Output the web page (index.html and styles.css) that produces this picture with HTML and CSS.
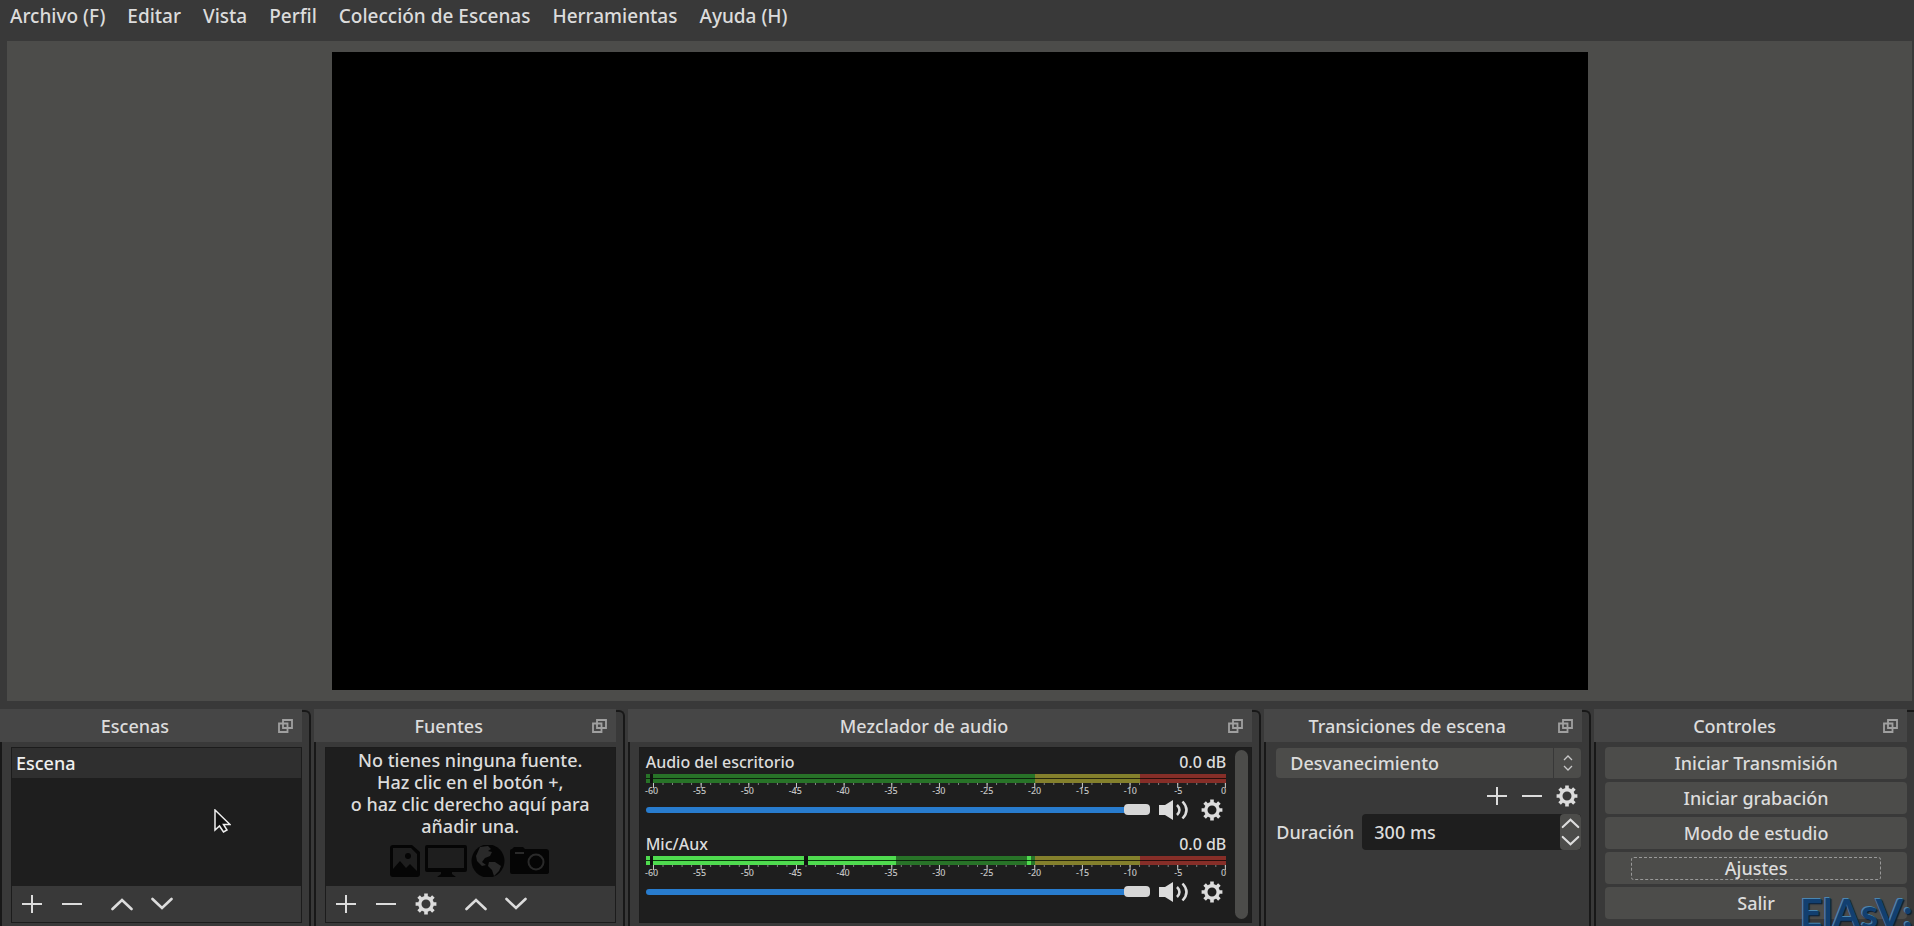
FILE: index.html
```html
<!DOCTYPE html>
<html lang="es">
<head>
<meta charset="utf-8">
<title>OBS</title>
<link rel="stylesheet" href="styles.css">
</head>
<body>
<svg class="defs" aria-hidden="true">
  <symbol id="plus" viewBox="0 0 22 22"><path d="M11 2v18M1 11h20" stroke="currentColor" stroke-width="2" fill="none"/></symbol>
  <symbol id="minus" viewBox="0 0 22 22"><path d="M1 11h20" stroke="currentColor" stroke-width="2" fill="none"/></symbol>
  <symbol id="up" viewBox="0 0 22 22"><path d="M1.500 16L11 7l9.500 9" stroke="currentColor" stroke-width="2.600" fill="none" stroke-linecap="round"/></symbol>
  <symbol id="down" viewBox="0 0 22 22"><path d="M1.500 6L11 15l9.500-9" stroke="currentColor" stroke-width="2.600" fill="none" stroke-linecap="round"/></symbol>
  <symbol id="gear" viewBox="0 0 22 22"><circle cx="11" cy="11" r="6.200" fill="none" stroke="currentColor" stroke-width="3.400"/><g stroke="currentColor" stroke-width="3.600"><path d="M11 .6v3.400M11 18v3.400M.6 11H4M18 11h3.400M3.600 3.600L6 6M16 16l2.400 2.400M3.600 18.400L6 16M16 6l2.400-2.400"/></g></symbol>
  <symbol id="float" viewBox="0 0 15 14"><g fill="none" stroke="currentColor" stroke-width="1.800"><path d="M5 1h9v8H5z"/><path d="M1 4.500h8.500V13H1z"/></g></symbol>
  <symbol id="speaker" viewBox="0 0 30 20"><path d="M0 5h6l8-5v20l-8-5H0z" fill="currentColor"/><path d="M18 5q5 5 0 10M23.500 1.500q8 8.500 0 17" fill="none" stroke="currentColor" stroke-width="2.500"/></symbol>
</svg>

<nav class="menubar">
  <button>Archivo (F)</button>
  <button>Editar</button>
  <button>Vista</button>
  <button>Perfil</button>
  <button>Colección de Escenas</button>
  <button>Herramientas</button>
  <button>Ayuda (H)</button>
</nav>

<main class="preview"><div class="canvas"></div></main>

<div class="docks">
  <section class="dock">
    <header class="dock-title"><h2>Escenas</h2><button class="float" aria-label="Desacoplar"><svg><use href="#float"/></svg></button></header>
    <div class="dock-body">
      <div class="panel">
        <ul class="scene-list"><li>Escena</li></ul>
        <div class="toolbar">
          <button aria-label="Añadir"><svg><use href="#plus"/></svg></button>
          <button aria-label="Quitar"><svg><use href="#minus"/></svg></button>
          <span class="spacer"></span>
          <button aria-label="Subir"><svg><use href="#up"/></svg></button>
          <button aria-label="Bajar"><svg><use href="#down"/></svg></button>
        </div>
      </div>
      <svg class="cursor" viewBox="0 0 17 24"><path d="M1 1v20l4.500-4 4 6 3.500-2-3.500-5.500H16z" fill="#111" stroke="#eee" stroke-width="1.500"/></svg>
    </div>
  </section>

  <section class="dock">
    <header class="dock-title"><h2>Fuentes</h2><button class="float" aria-label="Desacoplar"><svg><use href="#float"/></svg></button></header>
    <div class="dock-body">
      <div class="panel">
        <div class="sources">
          <p>No tienes ninguna fuente.<br>Haz clic en el botón +,<br>o haz clic derecho aquí para<br>añadir una.</p>
          <svg class="source-icons" viewBox="0 0 160 32">
            <path fill="#050505" fill-rule="evenodd" d="M3 0h19l8 7v22q0 3-3 3H3q-3 0-3-3V3q0-3 3-3zM3 3v21l7-8 6 7 4-4 7 7V9l-6-6z"/><circle cx="18" cy="11" r="3" fill="#050505"/>
            <path fill="#050505" fill-rule="evenodd" d="M37 0h38q2 0 2 2v23q0 2-2 2H62v2l4 3H47l4-3v-2H37q-2 0-2-2V2q0-2 2-2zm1 3v20h36V3z"/>
            <circle cx="98" cy="16" r="16.500" fill="#050505"/><path fill="#292929" d="M90 2l8-1 3 3-3 2 4 1-2 4-5 2-3 4 4 3-4 1-5-5-1-5zM99 17l6 0 6 4-2 5-5 5-2-6-4-4z"/>
            <path fill="#050505" d="M122 4l2-2h9l2 2h21q3 0 3 3v20q0 2-3 2h-34q-2 0-2-2V6q0-2 2-2z"/><path d="M125 8h9" stroke="#2a2a2a" stroke-width="2"/><circle cx="146" cy="17" r="7.500" fill="none" stroke="#2a2a2a" stroke-width="2"/>
          </svg>
        </div>
        <div class="toolbar">
          <button aria-label="Añadir"><svg><use href="#plus"/></svg></button>
          <button aria-label="Quitar"><svg><use href="#minus"/></svg></button>
          <button aria-label="Propiedades"><svg><use href="#gear"/></svg></button>
          <span class="spacer"></span>
          <button aria-label="Subir"><svg><use href="#up"/></svg></button>
          <button aria-label="Bajar"><svg><use href="#down"/></svg></button>
        </div>
      </div>
    </div>
  </section>

  <section class="dock">
    <header class="dock-title"><h2>Mezclador de audio</h2><button class="float" aria-label="Desacoplar"><svg><use href="#float"/></svg></button></header>
    <div class="dock-body">
      <div class="panel mixer">
        <div class="channels">
          <div class="channel">
            <div class="channel-head"><label for="vol-desktop">Audio del escritorio</label><span>0.0 dB</span></div>
            <div class="meter"><i class="clip"></i><div class="levels"></div></div>
            <div class="ticks"></div>
            <div class="scale"><span>-60</span><span>-55</span><span>-50</span><span>-45</span><span>-40</span><span>-35</span><span>-30</span><span>-25</span><span>-20</span><span>-15</span><span>-10</span><span>-5</span><span>0</span></div>
            <div class="channel-controls">
              <input id="vol-desktop" type="range" min="0" max="100" value="100">
              <button class="mute" aria-label="Silenciar"><svg><use href="#speaker"/></svg></button>
              <button class="config" aria-label="Configurar"><svg><use href="#gear"/></svg></button>
            </div>
          </div>
          <div class="channel">
            <div class="channel-head"><label for="vol-mic">Mic/Aux</label><span>0.0 dB</span></div>
            <div class="meter active"><i class="clip"></i><div class="levels"><i class="level"></i><i class="magnitude"></i><i class="peak"></i></div></div>
            <div class="ticks"></div>
            <div class="scale"><span>-60</span><span>-55</span><span>-50</span><span>-45</span><span>-40</span><span>-35</span><span>-30</span><span>-25</span><span>-20</span><span>-15</span><span>-10</span><span>-5</span><span>0</span></div>
            <div class="channel-controls">
              <input id="vol-mic" type="range" min="0" max="100" value="100">
              <button class="mute" aria-label="Silenciar"><svg><use href="#speaker"/></svg></button>
              <button class="config" aria-label="Configurar"><svg><use href="#gear"/></svg></button>
            </div>
          </div>
        </div>
        <div class="scrollbar"></div>
      </div>
    </div>
  </section>

  <section class="dock">
    <header class="dock-title"><h2>Transiciones de escena</h2><button class="float" aria-label="Desacoplar"><svg><use href="#float"/></svg></button></header>
    <div class="dock-body transitions">
      <div class="combo">
        <select aria-label="Transición"><option>Desvanecimiento</option></select>
        <svg class="combo-arrows" viewBox="0 0 10 16"><path d="M1 5l4-4 4 4M1 11l4 4 4-4" fill="none" stroke="#c8c8c8" stroke-width="1.300"/></svg>
      </div>
      <div class="transition-tools">
        <button aria-label="Añadir"><svg><use href="#plus"/></svg></button>
        <button aria-label="Quitar"><svg><use href="#minus"/></svg></button>
        <button aria-label="Propiedades"><svg><use href="#gear"/></svg></button>
      </div>
      <div class="duration">
        <label for="duration">Duración</label>
        <div class="spin">
          <input id="duration" type="text" value="300 ms">
          <div class="spin-buttons">
            <button aria-label="Aumentar"><svg><use href="#up"/></svg></button>
            <button aria-label="Disminuir"><svg><use href="#down"/></svg></button>
          </div>
        </div>
      </div>
    </div>
  </section>

  <section class="dock last">
    <header class="dock-title"><h2>Controles</h2><button class="float" aria-label="Desacoplar"><svg><use href="#float"/></svg></button></header>
    <div class="dock-body controls">
      <button>Iniciar Transmisión</button>
      <button>Iniciar grabación</button>
      <button>Modo de estudio</button>
      <button class="focused"><span>Ajustes</span></button>
      <button>Salir</button>
    </div>
  </section>
</div>
<div class="watermark">ElAsV:</div>
</body>
</html>
```

FILE: styles.css
```css
* { box-sizing: border-box; }

body {
  margin: 0;
  height: 100vh;
  display: flex;
  flex-direction: column;
  position: relative;
  overflow: hidden;
  background: #393939;
  color: #dcdcdc;
  font-family: "Noto Sans", "Open Sans", sans-serif;
  font-size: 18px;
  font-weight: 500;
}

button, input, select {
  font: inherit;
  color: inherit;
  background: none;
  border: 0;
  padding: 0;
  margin: 0;
}

svg { display: block; }
.defs { position: absolute; width: 0; height: 0; }

.menubar {
  display: flex;
  gap: 22px;
  height: 41px;
  padding: 0 10px 10px;
  align-items: center;
  font-size: 19px;
}

.preview {
  flex: 1;
  min-height: 0;
  margin: 0 2px 0 7px;
  padding: 11px;
  display: flex;
  justify-content: center;
  background: #4c4c4a;
}
.canvas { height: 100%; aspect-ratio: 1256 / 638; background: #000; }

.docks {
  display: grid;
  grid-template-columns: 311fr 311fr 634fr 327fr 320fr;
  column-gap: 3px;
  margin-top: 9px;
}

.dock {
  display: flex;
  flex-direction: column;
  min-width: 0;
  border: 2px solid #181818;
  border-bottom: 0;
  border-radius: 6px 6px 0 0;
}
.dock.last { border-right: 0; border-top-right-radius: 0; }

.dock-title {
  display: flex;
  align-items: center;
  height: 33px;
  margin: -3px 7px 0 -2px;
  background: #464646;
}
.dock-title h2 {
  flex: 1;
  margin: 0;
  text-align: center;
  font-size: 18px;
  font-weight: 500;
}
.float { width: 32px; padding-left: 8px; color: #a0a0a0; }
.float svg { width: 15px; height: 14px; }

.dock-body { flex: 1; position: relative; padding: 5px 7px 3px 9px; }

.panel {
  height: 176px;
  display: flex;
  flex-direction: column;
  border: 1px solid #1c1c1c;
  background: #1e1e1e;
}

.scene-list { flex: 1; margin: 0; padding: 0; list-style: none; }
.scene-list li { height: 30px; padding-left: 4px; line-height: 30px; background: #2f2f2f; color: #f0f0f0; }

.toolbar { display: flex; height: 36px; background: #393939; }
.toolbar button { width: 40px; display: flex; align-items: center; justify-content: center; }
.toolbar svg { width: 22px; height: 22px; }
.spacer { width: 10px; }

.cursor { position: absolute; left: 212px; top: 67px; width: 17px; height: 24px; }

.sources { flex: 1; display: flex; flex-direction: column; align-items: center; gap: 8px; }
.sources p { margin: 0; padding-top: 1px; text-align: center; line-height: 22px; white-space: nowrap; }
.source-icons { width: 160px; height: 32px; }

.mixer { flex-direction: row; gap: 9px; padding: 2px 3px 3px 6px; }
.channels { flex: 1; min-width: 0; }
.channel { height: 82px; }
.channel-head { display: flex; justify-content: space-between; height: 24px; line-height: 24px; font-size: 16px; }

.meter { display: flex; gap: 3px; height: 9px; background: #111; }
.meter > .clip { width: 4px; background: linear-gradient(#287328 4px, #0b260b 4px 5px, #287328 5px); }
.levels {
  flex: 1;
  position: relative;
  background:
    linear-gradient(transparent 4px, rgba(0, 0, 0, .7) 4px 5px, transparent 5px),
    linear-gradient(90deg, #287328 66.600%, #84802c 66.600% 85%, #862e28 85%);
}
.meter.active > .clip,
.level, .peak { background: linear-gradient(#4fdb4f 4px, #0b3a0b 4px 5px, #4fdb4f 5px); }
.level, .magnitude, .peak { position: absolute; top: 0; bottom: 0; }
.level { left: 0; width: 42.400%; }
.magnitude { left: 26.300%; width: 4px; background: #111; }
.peak { left: 65.300%; width: 4px; }

.ticks {
  height: 5px;
  margin-left: 7px;
  background:
    linear-gradient(90deg, #c8c8c8 1px, transparent 1px) 0 0 / calc((100% - 1px) / 12) 5px repeat-x,
    linear-gradient(90deg, #858585 1px, transparent 1px) 0 0 / calc((100% - 1px) / 60) 2px repeat-x;
}
.scale { display: flex; justify-content: space-between; height: 10px; margin-left: 6px; font-size: 9px; line-height: 6px; color: #c4c4c4; }
.scale span { width: 0; display: flex; justify-content: center; white-space: nowrap; }
.scale span:last-child { justify-content: flex-end; }

.channel-controls { display: flex; align-items: center; height: 24px; }
.channel-controls input { flex: 1; min-width: 0; height: 16px; appearance: none; }
.channel-controls input::-webkit-slider-runnable-track { height: 6px; border-radius: 3px; background: #287cce; }
.channel-controls input::-webkit-slider-thumb { appearance: none; width: 26px; height: 11px; margin-top: -3px; border-radius: 4px; background: #d6d6d6; }
.mute { margin-left: 9px; }
.mute svg { width: 30px; height: 20px; }
.config { margin: 0 3px 0 12px; }
.config svg { width: 22px; height: 22px; }

.scrollbar { width: 13px; border-radius: 7px; background: #4c4c4a; }

.combo { position: relative; margin-top: 1px; }
.combo select {
  appearance: none;
  display: block;
  width: 100%;
  height: 30px;
  padding-left: 14px;
  border-radius: 4px;
  background: linear-gradient(90deg, transparent calc(100% - 28px), #383838 calc(100% - 28px) calc(100% - 27px), transparent calc(100% - 27px)), #4c4c4a;
}
.combo-arrows { position: absolute; right: 8px; top: 7px; width: 10px; height: 16px; pointer-events: none; }

.dock-body.transitions { padding-left: 10px; padding-right: 8px; }
.transition-tools { display: flex; justify-content: flex-end; gap: 13px; height: 36px; padding-right: 3px; align-items: center; }
.transition-tools svg { width: 22px; height: 22px; }

.duration { display: flex; align-items: center; gap: 8px; }
.spin { flex: 1; display: flex; height: 36px; border-radius: 4px; overflow: hidden; background: #1e1e1e; }
.spin input { flex: 1; min-width: 0; padding-left: 12px; }
.spin-buttons { display: flex; flex-direction: column; width: 21px; border-radius: 4px; background: #4c4c4a; }
.spin-buttons button { height: 18px; overflow: hidden; }
.spin-buttons svg { width: 21px; height: 18px; }

.controls { display: flex; flex-direction: column; gap: 3px; }
.controls button {
  height: 32px;
  display: flex;
  align-items: center;
  justify-content: center;
  border-radius: 4px;
  background: #4c4c4a;
}
.controls .focused span {
  flex: 1;
  height: 23px;
  margin: 0 26px;
  line-height: 20px;
  border: 1px dashed #999;
  border-radius: 3px;
}

.watermark {
  position: absolute;
  right: 1px;
  bottom: 0;
  font: 700 40px/26px Lato, sans-serif;
  color: #123f70;
  text-shadow: -1px -1px 0 #4a86b0, 1px 1px 1px #0a1c30;
  pointer-events: none;
}
```
